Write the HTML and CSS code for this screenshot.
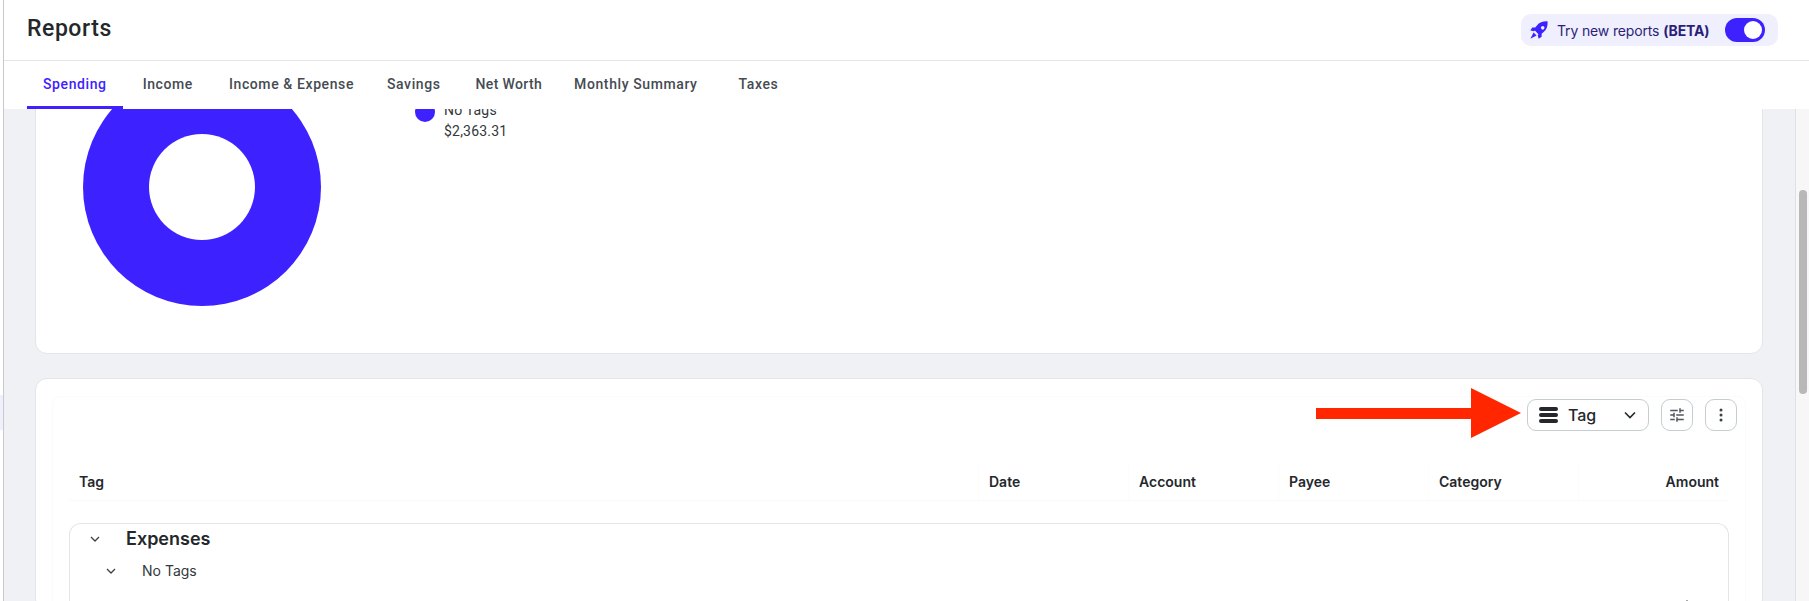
FILE: index.html
```html
<!DOCTYPE html>
<html>
<head>
<meta charset="utf-8" />
<title>Reports</title>
<link rel="stylesheet" href="styles.css">
</head>
<body>
<div id="wrap">
  <div class="edge"><span class="edge_mark"></span></div>
  <div id="app">
    <div class="top">
      <h1>Reports</h1>
      <div class="beta">
        <svg class="rocket" width="18" height="18" viewBox="0 0 24 24"><path fill="#3d22ff" d="M23.500.5c-6-.3-11 1.400-14.500 5.700L7 8.500H3L.5 12.500l5 1.200 1-1 4.800 4.800-1 1 1.200 5 4-2.500v-4l2.300-2C22.100 11.500 23.800 6.500 23.500.5zM15.300 10.700a2.300 2.300 0 1 1 3.300-3.300 2.300 2.300 0 0 1-3.300 3.300zM4.800 15.200l4 4-8.300 4.300z"/></svg>
        <span class="beta_text">Try new reports <b>(BETA)</b></span>
        <span class="toggle"><i></i></span>
      </div>
    </div>
    <ul class="tabs">
      <li class="on"><a href="javascript:;">Spending</a></li>
      <li><a href="javascript:;">Income</a></li>
      <li><a href="javascript:;">Income &amp; Expense</a></li>
      <li><a href="javascript:;">Savings</a></li>
      <li><a href="javascript:;">Net Worth</a></li>
      <li><a href="javascript:;">Monthly Summary</a></li>
      <li><a href="javascript:;">Taxes</a></li>
    </ul>
    <div class="view">
      <div class="content">
        <div class="card chart">
          <div class="donut"><span></span></div>
          <div class="legend">
            <span class="dot"></span>
            <div class="legend_text">
              <div>No Tags</div>
              <div>$2,363.31</div>
            </div>
          </div>
        </div>
        <div class="card detail">
          <div class="frame">
            <div class="toolbar">
              <svg class="arrow" width="205" height="50" viewBox="1 0 205 50"><path fill="#ff2600" d="M0 20h156V0l50 25-50 25V31H0z"/></svg>
              <div class="group_by">
                <span class="bars"><i></i><i></i><i></i></span>
                <span class="group_name">Tag</span>
                <svg width="14" height="14" viewBox="0 0 14 14"><path fill="none" stroke="#24282c" stroke-width="1.600" d="M2 4.500 7 9.500l5-5"/></svg>
              </div>
              <div class="icon_btn">
                <svg width="18" height="18" viewBox="0 0 24 24"><path fill="#50565b" d="M3 17v2h6v-2H3zM3 5v2h10V5H3zm10 16v-2h8v-2h-8v-2h-2v6h2zM7 9v2H3v2h4v2h2V9H7zm14 4v-2H11v2h10zm-6-4h2V7h4V5h-4V3h-2v6z"/></svg>
              </div>
              <div class="icon_btn">
                <svg width="18" height="18" viewBox="0 0 18 18"><g fill="#3c4145"><circle cx="9" cy="4" r="1.500"/><circle cx="9" cy="9" r="1.500"/><circle cx="9" cy="14" r="1.500"/></g></svg>
              </div>
            </div>
            <div class="thead">
              <div class="th first">Tag</div>
              <div class="th">Date</div>
              <div class="th">Account</div>
              <div class="th">Payee</div>
              <div class="th">Category</div>
              <div class="th right">Amount</div>
            </div>
            <div class="group">
              <div class="row">
                <svg class="chev" width="12" height="12" viewBox="0 0 12 12"><path fill="none" stroke="#3c4145" stroke-width="1.300" d="M2 4l4 4 4-4"/></svg>
                <span class="row_title">Expenses</span>
              </div>
              <div class="row sub">
                <svg class="chev" width="12" height="12" viewBox="0 0 12 12"><path fill="none" stroke="#3c4145" stroke-width="1.300" d="M2 4l4 4 4-4"/></svg>
                <span>No Tags</span>
              </div>
              <div class="row more">
                <svg width="12" height="12" viewBox="0 0 12 12"><path fill="none" stroke="#3c4145" stroke-width="1.300" d="M2 8l4-4 4 4"/></svg>
              </div>
            </div>
          </div>
        </div>
      </div>
      <div class="scrollbar"><span></span></div>
    </div>
  </div>
</div>
</body>
</html>
```

FILE: styles.css
```css
* {margin:0;padding:0;box-sizing:border-box}
ul,li {list-style:none}
a {color:inherit;text-decoration:none}
html,body {height:601px;overflow:hidden;background:#fff}
body {font-family:"Inter","Noto Sans",sans-serif;color:#24282c}

#wrap {display:flex;height:601px}
.edge {width:4px;flex:none;background:#fff;border-right:1px solid #c9c9cc;padding-top:395px}
.edge_mark {display:block;width:3px;height:35px;background:#f0effd}
#app {flex:1;min-width:0;display:flex;flex-direction:column}

.top {height:61px;flex:none;display:flex;align-items:center;justify-content:space-between;padding:0 31px 3px 23px;border-bottom:1px solid #e3e5e8;background:#fff}
.top h1 {font:500 23px "Roboto",sans-serif;letter-spacing:.55px;color:#24282c}
.beta {display:flex;align-items:center;width:257px;height:32px;margin-top:3px;padding:0 13px 0 9px;background:#f0effd;border-radius:10px}
.rocket {flex:none}
.beta_text {flex:1;margin-left:9px;font-size:14px;letter-spacing:-.15px;color:#2a1f78}
.beta_text b {font-weight:700}
.toggle {width:40px;height:24px;padding:3px 3px 3px 19px;background:#3d22ff;border-radius:12px}
.toggle i {display:block;width:18px;height:18px;background:#fff;border-radius:50%}

.tabs {height:48px;flex:none;display:flex;padding-left:23px;background:#fff;font:500 14px "Roboto",sans-serif;letter-spacing:.6px;color:#454b52;position:relative;z-index:2}
.tabs li {padding:0 16px;line-height:46px;white-space:nowrap}
.tabs li a {display:block}
.tabs li.on {color:#3d22ff;border-bottom:3px solid #3d22ff}
.tabs li + li {margin-left:4px}
.tabs li:nth-child(4) {margin-left:1px}
.tabs li:nth-child(5) {margin-left:3px;letter-spacing:.35px}
.tabs li:nth-child(6) {margin-left:0}
.tabs li:nth-child(7) {margin-left:9px}

.view {flex:1;min-height:0;display:flex}
.content {flex:1;min-width:0;overflow:hidden;background:#f0f1f5;padding:0 32px 0 31px}
.card {background:#fff;border:1px solid #e3e5e8;border-radius:12px}

.chart {height:306px;margin-top:-61px;display:flex;padding:19px 0 0 47px}
.donut {width:238px;height:238px;flex:none;background:#3d22ff;border-radius:50%;display:flex;align-items:center;justify-content:center}
.donut span {width:106px;height:106px;background:#fff;border-radius:50%}
.legend {display:flex;margin-left:94px;padding-top:34px;font:400 14px "Roboto",sans-serif;letter-spacing:.2px;color:#33383c}
.dot {width:20px;height:20px;flex:none;background:#3d22ff;border-radius:50%}
.legend_text {margin-left:9px;margin-top:-2px;line-height:21px}

.detail {margin-top:24px;padding:17px 16px 0}
.frame {border:1px solid #fbfbfb;border-radius:8px;padding:2px 16px 0}
.toolbar {display:flex;justify-content:flex-end;gap:12px;margin-right:-8px;position:relative}
.arrow {position:absolute;top:-11px;right:216px}
.group_by {width:122px;height:32px;display:flex;align-items:center;gap:10px;padding:0 11px;border:1px solid #c5cdd0;border-radius:9px}
.group_by svg {margin-left:auto}
.bars {display:flex;flex-direction:column;gap:2px;width:19px}
.bars i {display:block;height:4px;background:#24282c;border-radius:2px}
.group_name {font-size:16px;font-weight:500}
.icon_btn {width:32px;height:32px;display:flex;align-items:center;justify-content:center;border:1px solid #c5cdd0;border-radius:9px}

.thead {display:grid;grid-template-columns:1fr repeat(5,150px);height:38px;margin-top:32px;border-bottom:1px solid #f9f9fa;font-size:14px;font-weight:600}
.th {padding:0 10px;line-height:37px;border-right:1px solid #fcfcfc}
.th.right {text-align:right;border-right:0}

.group {margin-top:22px;padding-top:2px;border:1px solid #e3e5e8;border-radius:12px 12px 0 0;border-bottom:0}
.row {display:flex;align-items:center}
.row .chev {margin-left:19px;flex:none}
.row_title {margin-left:25px;font-size:18px;font-weight:600;line-height:26px}
.row.sub {margin-top:10px;font-size:14px;color:#33383c}
.row.sub .chev {margin-left:35px}
.row.sub span {margin-left:25px}
.row.more {justify-content:flex-end;margin-top:18px;padding-right:35px}

.scrollbar {width:14px;flex:none;background:#f7f7f7;border-left:1px solid #dfe0e2;padding:81px 1px 0 3px}
.scrollbar span {display:block;width:8px;height:204px;background:#b8b8b8;border-radius:4px}
```
